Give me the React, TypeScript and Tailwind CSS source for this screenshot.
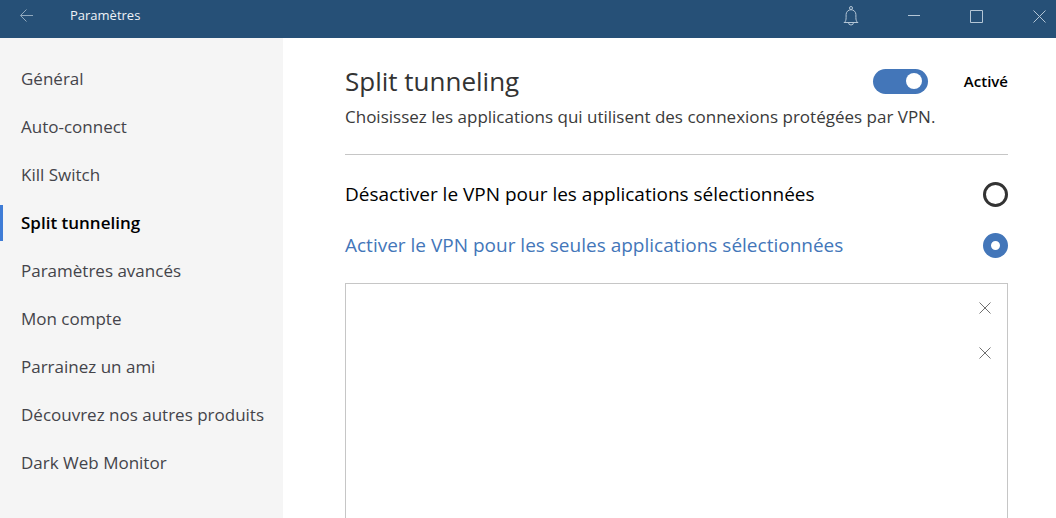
import { useState } from "react";

const NAV_ITEMS = [
  "Général",
  "Auto-connect",
  "Kill Switch",
  "Split tunneling",
  "Paramètres avancés",
  "Mon compte",
  "Parrainez un ami",
  "Découvrez nos autres produits",
  "Dark Web Monitor",
];

const MODES = [
  { id: "disable", label: "Désactiver le VPN pour les applications sélectionnées" },
  { id: "enable", label: "Activer le VPN pour les seules applications sélectionnées" },
];

function TitleBar() {
  return (
    <header className="flex h-[38px] shrink-0 items-center bg-[#265077] pr-2 pb-1.5 pl-5 text-[#b4c6d6]">
      <button type="button" aria-label="Retour">
        <svg className="h-3.5 w-3.5" viewBox="0 0 14 14" fill="none" stroke="#90a8bd">
          <path d="M13 6.5H.7M6.5.5l-6 6 6 6" />
        </svg>
      </button>
      <h1 className="ml-9 text-[13px] text-[#eef2f6]">Paramètres</h1>
      <div className="ml-auto flex items-center gap-[47px]">
        <button type="button" aria-label="Notifications">
          <svg className="h-5 w-4" viewBox="0 0 16 20" fill="none" stroke="currentColor">
            <circle cx="8" cy="2" r="1.5" />
            <path d="M.8 16.5h14.4M1.5 16.5c1.2-1.4 1.6-2.6 1.6-5V8.6a4.9 4.9 0 0 1 9.8 0v2.9c0 2.4.4 3.6 1.6 5M5.5 16.5a2.5 2.500 0 0 0 5 0" />
          </svg>
        </button>
        <button type="button" aria-label="Réduire">
          <svg className="h-4 w-4" viewBox="0 0 16 16" fill="none" stroke="currentColor">
            <path d="M2 7.5h12" />
          </svg>
        </button>
        <button type="button" aria-label="Agrandir">
          <svg className="h-4 w-4" viewBox="0 0 16 16" fill="none" stroke="currentColor">
            <path d="M1.5 2.5h12v12h-12z" />
          </svg>
        </button>
        <button type="button" aria-label="Fermer">
          <svg className="h-4 w-4" viewBox="0 0 16 16" fill="none" stroke="currentColor">
            <path d="M1.500 2.500l12 12M13.500 2.500l-12 12" />
          </svg>
        </button>
      </div>
    </header>
  );
}

function Sidebar() {
  return (
    <nav className="w-[283px] shrink-0 bg-[#f5f5f5] pt-[17px]">
      <ul>
        {NAV_ITEMS.map((item) => {
          const active = item === "Split tunneling";
          return (
            <li key={item} className="flex h-12 items-center">
              <a
                href="#"
                aria-current={active ? "page" : undefined}
                className={
                  active
                    ? "flex h-9 items-center border-l-3 border-[#3f7cd6] pl-[18px] text-[17px] font-semibold text-black"
                    : "flex h-9 items-center pl-[21px] text-[17px] text-[#44444a]"
                }
              >
                {item}
              </a>
            </li>
          );
        })}
      </ul>
    </nav>
  );
}

export default function App() {
  const [enabled, setEnabled] = useState(true);
  const [mode, setMode] = useState("enable");
  const [apps, setApps] = useState([1, 2]);

  return (
    <div className="flex h-screen flex-col overflow-hidden bg-white font-['Open_Sans','Noto_Sans',sans-serif]">
      <TitleBar />
      <div className="flex min-h-0 flex-1">
        <Sidebar />
        <main className="flex min-w-0 flex-1 flex-col pt-[23px] pr-12 pl-[62px]">
          <div className="border-b border-[#c6c6c6] pb-[21px]">
            <div className="flex items-center justify-between">
              <h2 className="text-[26px] leading-10 text-[#333]">Split tunneling</h2>
              <label className="flex items-center gap-9 text-[15px] font-semibold text-black">
                {/* Toggle: the knob is the input's ::before */}
                <input
                  type="checkbox"
                  role="switch"
                  checked={enabled}
                  onChange={(e) => setEnabled(e.target.checked)}
                  className="flex h-[25px] w-[55px] appearance-none items-center rounded-full bg-[#999] px-1.5 before:h-4 before:w-4 before:rounded-full before:bg-white checked:justify-end checked:bg-[#4376b9]"
                />
                {enabled ? "Activé" : "Désactivé"}
              </label>
            </div>
            <p className="text-[17px] leading-8 text-[#3a3a3a]">
              Choisissez les applications qui utilisent des connexions protégées par VPN.
            </p>
          </div>

          <div role="radiogroup" aria-label="Mode" className="flex flex-col pt-3.5">
            {MODES.map(({ id, label }) => (
              <label
                key={id}
                className="flex h-[51px] items-center justify-between text-[19px] text-black has-checked:text-[#4376b9]"
              >
                {label}
                <input
                  type="radio"
                  name="mode"
                  value={id}
                  checked={mode === id}
                  onChange={() => setMode(id)}
                  className="h-[25px] w-[25px] shrink-0 appearance-none rounded-full border-3 border-[#333] checked:border-8 checked:border-[#4376b9]"
                />
              </label>
            ))}
          </div>

          <ul className="mt-3 flex-1 border border-b-0 border-[#c6c6c6] pt-px pr-[15px]">
            {apps.map((app) => (
              <li key={app} className="flex h-[45px] items-center justify-end">
                <button
                  type="button"
                  aria-label="Supprimer"
                  onClick={() => setApps(apps.filter((a) => a !== app))}
                >
                  <svg className="h-3.5 w-3.5" viewBox="0 0 14 14" fill="none" stroke="#707070">
                    <path d="M1.5 1.5l11 11M12.5 1.5l-11 11" />
                  </svg>
                </button>
              </li>
            ))}
          </ul>
        </main>
      </div>
    </div>
  );
}
